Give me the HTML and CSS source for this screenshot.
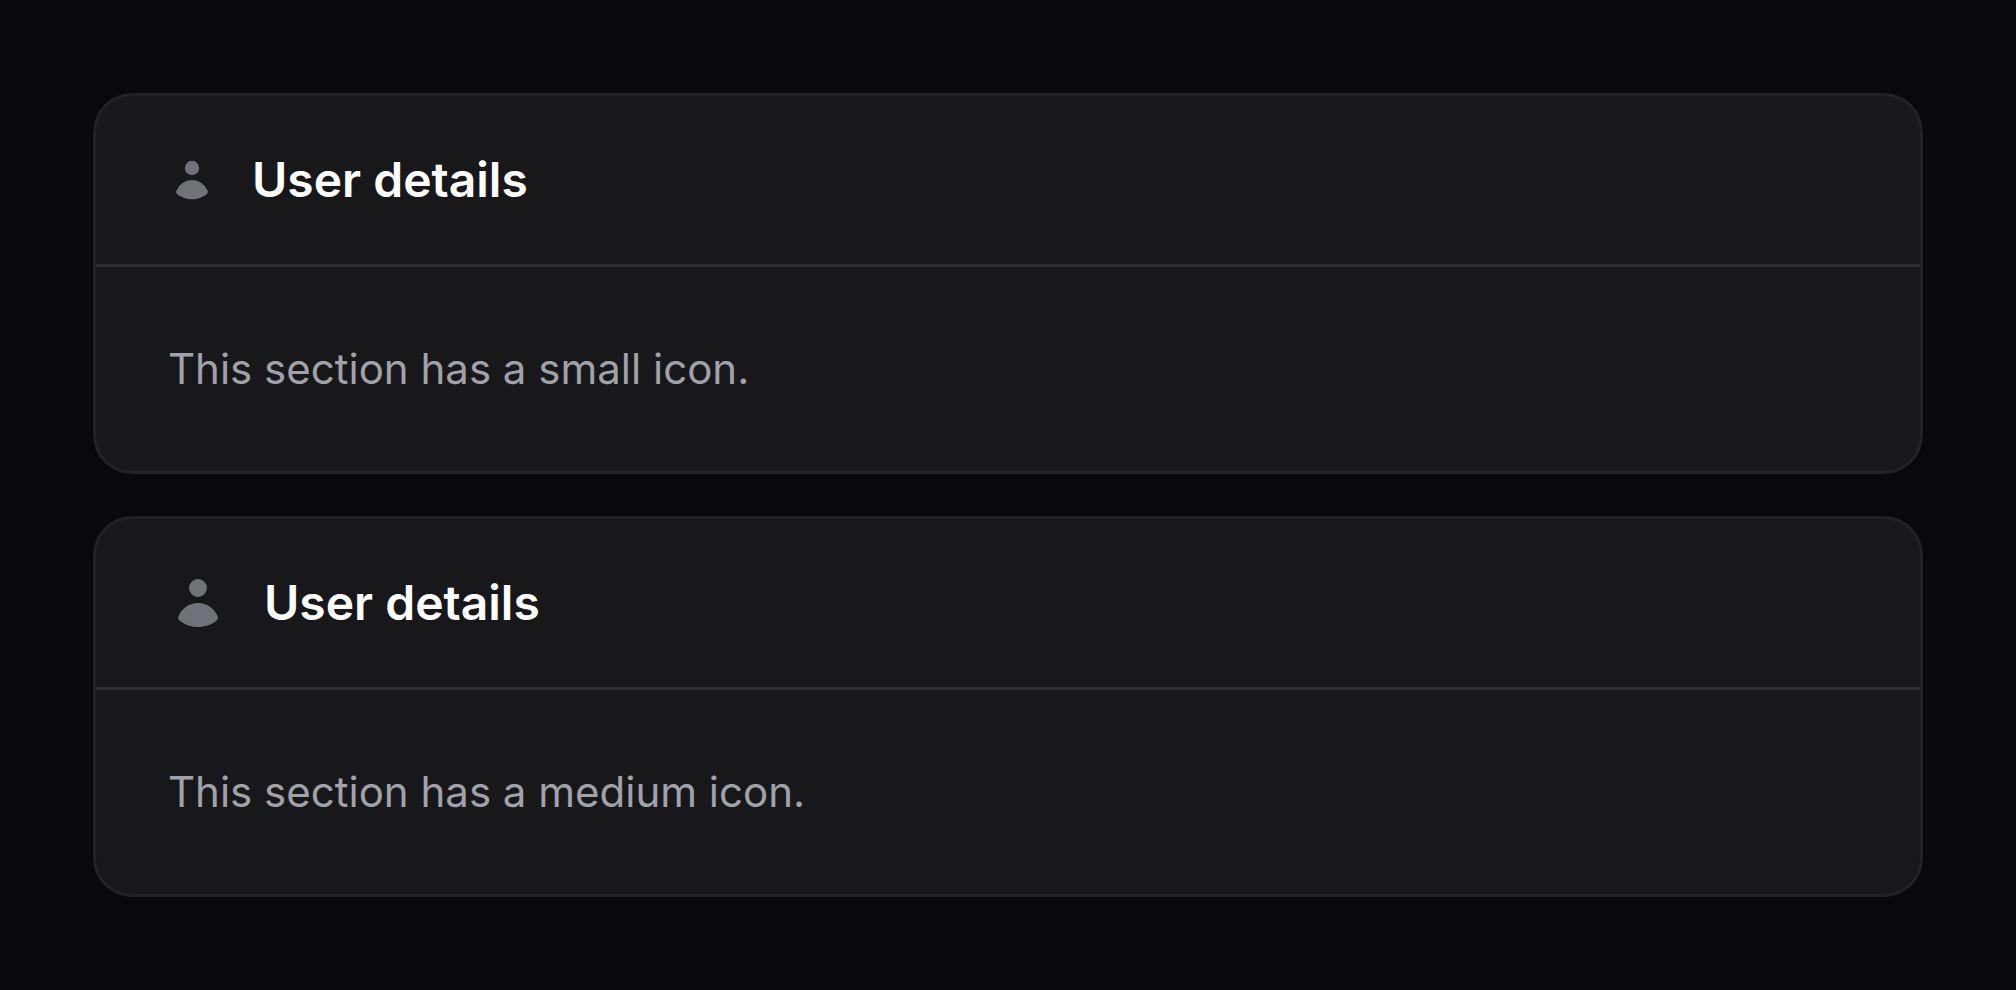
FILE: index.html
```html
<!DOCTYPE html>
<html lang="en">
<head>
<meta charset="utf-8">
<title>User details</title>
<link rel="stylesheet" href="styles.css">
</head>
<body>
<main class="page">
  <section class="section">
    <header class="section-header">
      <svg class="icon icon-small" viewBox="0 0 20 20" fill="currentColor" aria-hidden="true"><path d="M10 8a3 3 0 1 0 0-6 3 3 0 0 0 0 6ZM3.465 14.493a1.23 1.23 0 0 0 .41 1.412A9.957 9.957 0 0 0 10 18c2.31 0 4.438-.784 6.131-2.1.43-.333.604-.903.408-1.41a7.002 7.002 0 0 0-13.074.003Z"/></svg>
      <h2 class="heading">User details</h2>
    </header>
    <div class="section-content"><p class="text">This section has a small icon.</p></div>
  </section>
  <section class="section">
    <header class="section-header">
      <svg class="icon icon-medium" viewBox="0 0 20 20" fill="currentColor" aria-hidden="true"><path d="M10 8a3 3 0 1 0 0-6 3 3 0 0 0 0 6ZM3.465 14.493a1.23 1.23 0 0 0 .41 1.412A9.957 9.957 0 0 0 10 18c2.31 0 4.438-.784 6.131-2.1.43-.333.604-.903.408-1.41a7.002 7.002 0 0 0-13.074.003Z"/></svg>
      <h2 class="heading">User details</h2>
    </header>
    <div class="section-content"><p class="text">This section has a medium icon.</p></div>
  </section>
</main>
</body>
</html>
```
FILE: styles.css
```css
body {
  margin: 0;
  background: #09090b;
  font-family: Inter, "Liberation Sans", sans-serif;
}
.page {
  display: grid;
  gap: 48px;
  padding: 96px;
}
.section {
  border-radius: 36px;
  background: #18181b;
  box-shadow: 0 0 0 3px rgb(255 255 255 / 10%);
}
.section-header {
  display: flex;
  align-items: center;
  gap: 36px;
  padding: 48px 72px;
}
.icon {
  flex: none;
  color: #71717a;
}
.icon-small {
  width: 48px;
  height: 48px;
}
.icon-medium {
  width: 60px;
  height: 60px;
}
.heading {
  margin: 0;
  font-size: 48px;
  line-height: 72px;
  font-weight: 600;
  color: #fff;
}
.section-content {
  padding: 72px;
  border-top: 3px solid rgb(255 255 255 / 10%);
}
.text {
  margin: 0;
  font-size: 42px;
  line-height: 60px;
  color: #a1a1aa;
}
```
